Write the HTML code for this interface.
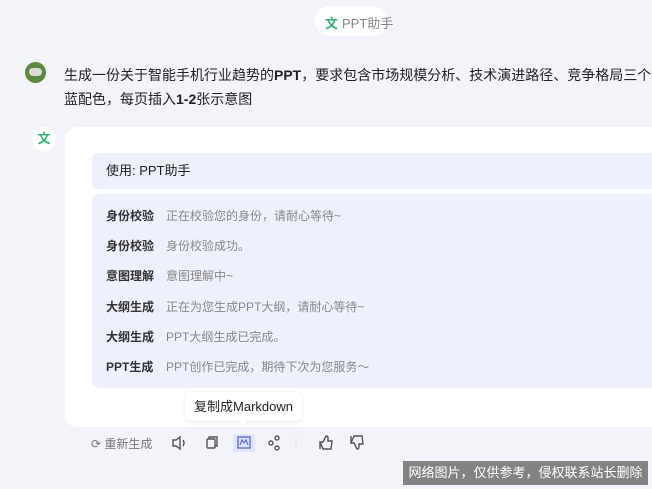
<!DOCTYPE html><html><head><meta charset="utf-8"><style>
body{margin:0;width:652px;height:489px;overflow:hidden;background:#f3f4fa;font-family:"Liberation Sans","Noto Sans CJK SC",sans-serif;position:relative;color:#222}
.abs{position:absolute}
.ic{fill:none;stroke:#555;stroke-width:1.4}
</style></head><body>
<div class="abs" style="left:315px;top:6px;width:72px;height:30px;background:#fff;border-radius:15px"></div>
<div class="abs" style="left:325px;top:13px;color:#2bb673;font-size:13px;font-weight:bold">文</div>
<div class="abs" style="left:342px;top:13px;color:#888;font-size:13px">PPT助手</div>
<div class="abs" style="left:25px;top:62px;width:21px;height:21px;border-radius:50%;background:#5a8a3a"><div style="margin:6px 4px;width:13px;height:8px;background:#ddd;border-radius:4px"></div></div>
<div class="abs" style="left:64px;top:63px;font-size:14px;line-height:24px;white-space:nowrap">生成一份关于智能手机行业趋势的<b>PPT</b>，要求包含市场规模分析、技术演进路径、竞争格局三个模<br>蓝配色，每页插入<b>1-2</b>张示意图</div>
<div class="abs" style="left:32px;top:127px;width:24px;height:24px;border-radius:50%;background:#fff;color:#2bb673;font-size:13px;font-weight:bold;text-align:center;line-height:24px">文</div>
<div class="abs" style="left:65px;top:127px;width:600px;height:300px;background:#fff;border-radius:12px"></div>
<div class="abs" style="left:92px;top:153px;width:570px;height:36px;background:#eef0fb;border-radius:6px;font-size:13px;line-height:36px;padding-left:14px;box-sizing:border-box">使用: PPT助手</div>
<div class="abs" style="left:92px;top:194px;width:570px;height:194px;background:#eef0fb;border-radius:6px;font-size:12px">
<div style="position:absolute;left:14px;top:7px;line-height:30.2px;font-weight:bold;color:#333">身份校验<br>身份校验<br>意图理解<br>大纲生成<br>大纲生成<br>PPT生成</div>
<div style="position:absolute;left:74px;top:7px;line-height:30.2px;color:#888">正在校验您的身份，请耐心等待~<br>身份校验成功。<br>意图理解中~<br>正在为您生成PPT大纲，请耐心等待~<br>PPT大纲生成已完成。<br>PPT创作已完成，期待下次为您服务～</div>
</div>
<div class="abs" style="left:185px;top:392px;width:117px;height:29px;background:#fff;border-radius:6px;font-size:13px;line-height:29px;text-align:center;box-shadow:0 1px 4px rgba(0,0,0,.1)">复制成Markdown</div>
<div class="abs" style="left:238px;top:420px;width:0;height:0;border:5px solid transparent;border-top-color:#fff"></div>
<div class="abs" style="left:91px;top:435px;font-size:12px;color:#777">⟳ 重新生成</div>
<svg class="abs" style="left:170px;top:434px" width="200" height="18">
<path class="ic" d="M3 6h3l4-3v12l-4-3H3z M13 6q2 3 0 6"/>
<rect class="ic" x="37" y="5" width="8" height="9" rx="1"/><path class="ic" d="M39 5V3h8v9h-2"/>
<rect x="63" y="-1" width="22" height="20" rx="3" fill="#e1e5fb"/>
<rect x="68" y="3" width="12" height="11" fill="none" stroke="#5b6ee8" stroke-width="1.4"/><path d="M70 11l2-5 2 3 2-3 2 5" fill="none" stroke="#5b6ee8" stroke-width="1.2"/>
<circle class="ic" cx="101" cy="9" r="2"/><circle class="ic" cx="107" cy="4" r="2"/><circle class="ic" cx="107" cy="14" r="2"/>
<path d="M126 4v10" stroke="#ddd"/>
<path class="ic" d="M150 8h3l3-6q2 0 2 2v3h4l-1 8h-8z M150 8v7"/>
<path class="ic" d="M181 9h3l3 6q2 0 2-2v-3h4l-1-8h-8z M181 9v-7"/>
</svg>
<div class="abs" style="left:403px;top:461px;width:245px;height:24px;background:rgba(110,110,110,.85);color:#fff;font-size:13px;line-height:24px;text-align:center">网络图片，仅供参考，侵权联系站长删除</div>
</body></html>
